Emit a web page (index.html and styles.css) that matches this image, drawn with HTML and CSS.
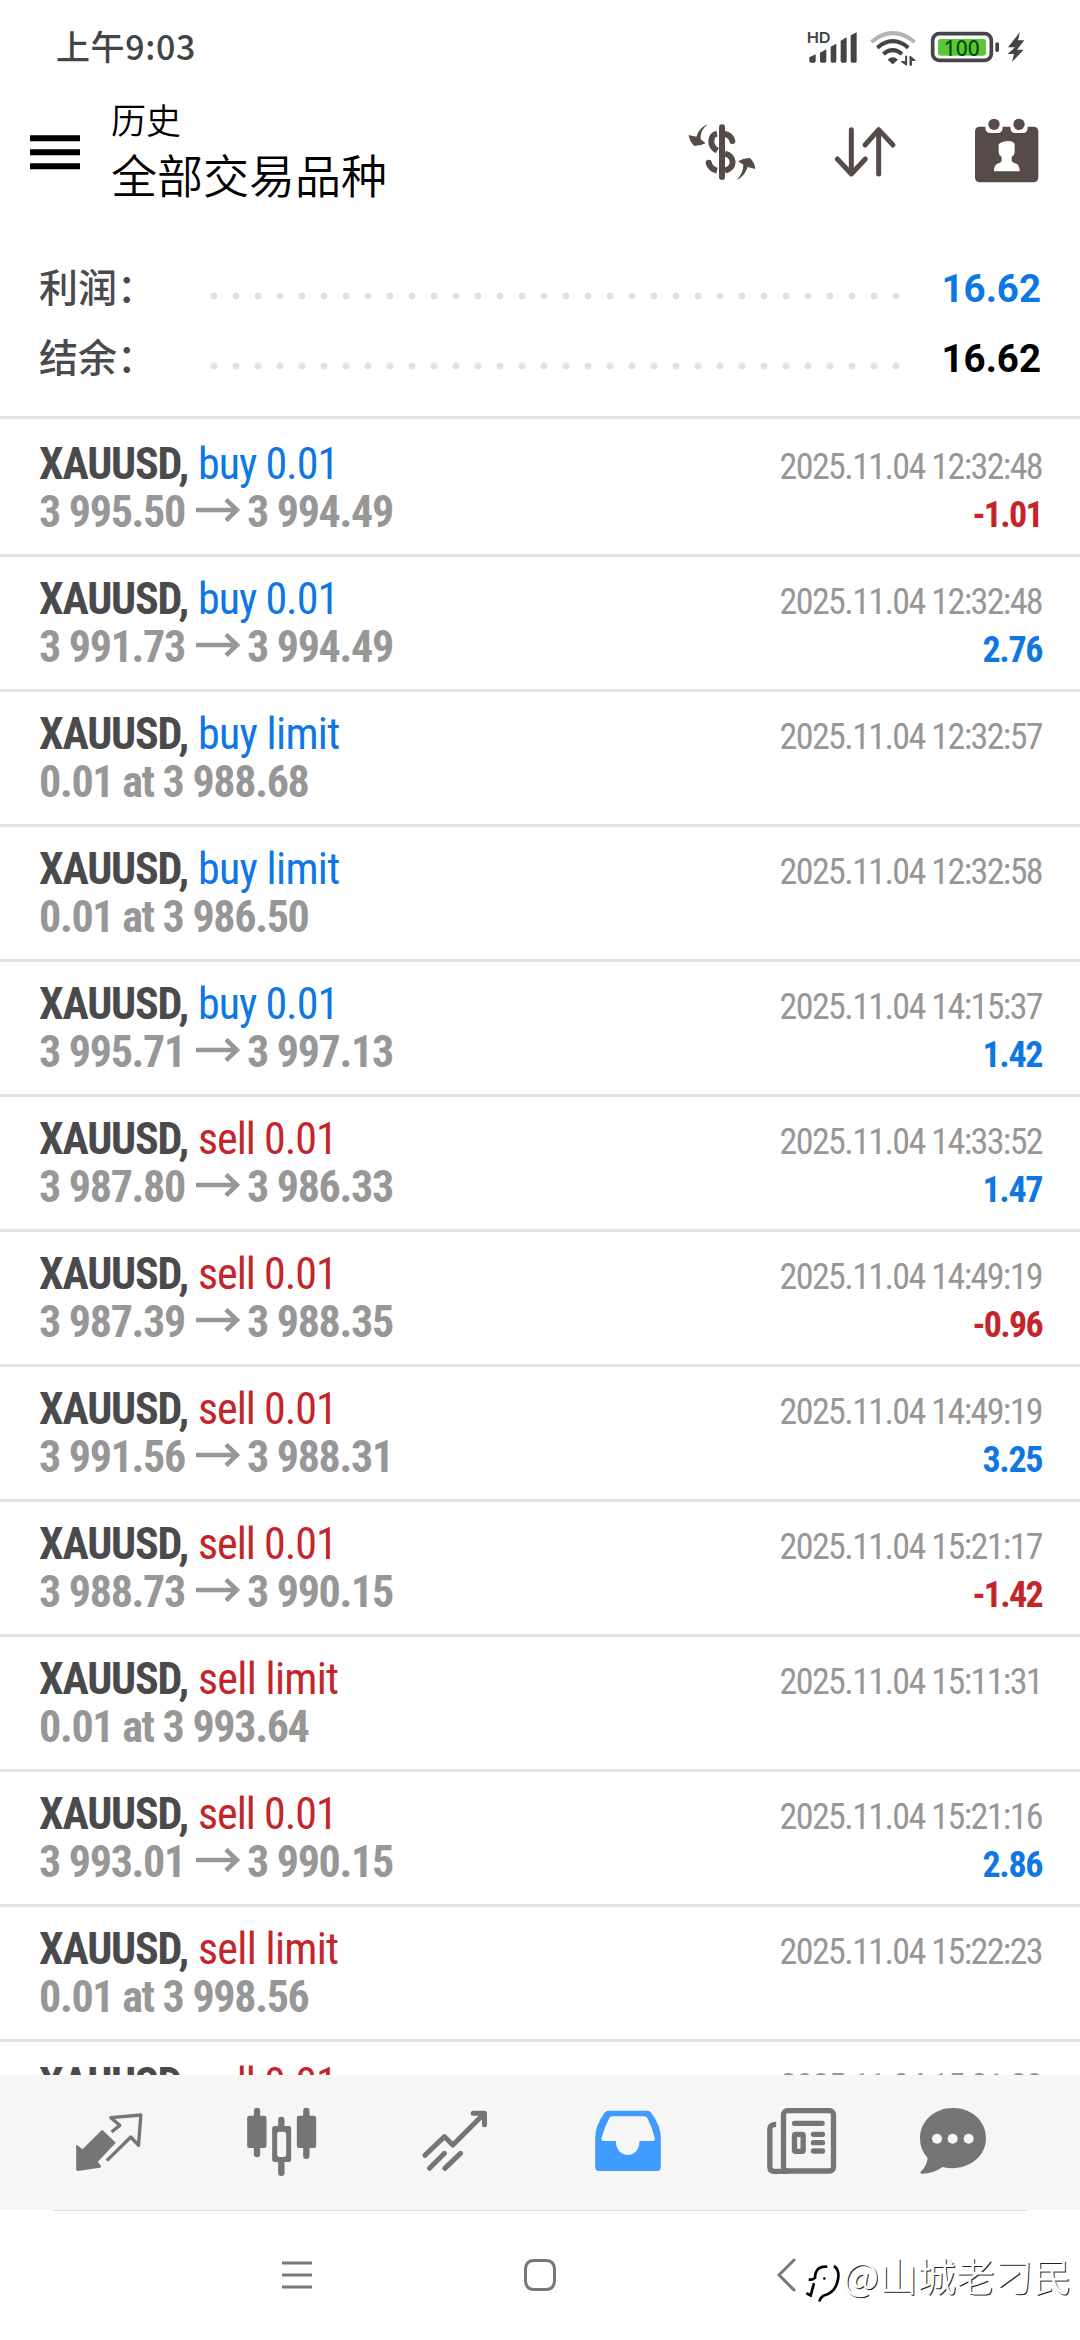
FILE: index.html
```html
<!DOCTYPE html>
<html lang="zh-CN">
<head>
<meta charset="utf-8">
<title>历史</title>
<link rel="stylesheet" href="styles.css">
</head>
<body>
<svg class="defs" width="0" height="0"><symbol id="arrow" viewBox="0 0 44 24"><path d="M0 12H41M30 1.5L41 12L30 22.5" fill="none" stroke="#979797" stroke-width="4.5"/></symbol></svg>
<div class="status">
  <span class="clock">上午9:03</span>
  <svg class="status-icons" viewBox="420 60 690 150">
    <text x="440" y="129" class="hd" textLength="72" lengthAdjust="spacingAndGlyphs">HD</text>
    <g fill="#444">
      <path d="M448 172L467 163V183Q467 188 462 188H453Q448 188 448 183ZM480 158L499 148V183Q499 188 494 188H485Q480 188 480 183ZM512 140L529 131V183Q529 188 524 188H517Q512 188 512 183ZM542 122L560 112V183Q560 188 555 188H547Q542 188 542 183ZM572 106L590 97V183Q590 188 585 188H577Q572 188 572 183Z"/>
      <path d="M683 179Q698 165 714 179L700 191Q698 193 696 191Z"/>
      <path d="M737 168V185H724L740 196V168ZM750 196V168L766 181H754V196Z" stroke="#444" stroke-width="3"/>
      <path d="M1080 96L1044 142H1065L1043 162H1062L1056 186L1091 149H1071L1093 121H1074Z"/>
      <rect x="1006" y="127" width="11" height="29" rx="5"/>
    </g>
    <g fill="none" stroke-width="12">
      <path d="M634 126Q698 73 764 126" stroke="#b5b5b5"/>
      <path d="M652 143Q698 104 745 143" stroke="#444"/>
      <path d="M670 162Q698 139 726 162" stroke="#444"/>
    </g>
    <rect x="818" y="101" width="176" height="80" rx="20" fill="#fff" stroke="#444548" stroke-width="11"/>
    <rect x="834" y="117" width="144" height="50" rx="7" fill="#59c837"/>
    <text x="851" y="167" class="battery" textLength="108" lengthAdjust="spacingAndGlyphs">100</text>
  </svg>
</div>

<header class="header">
  <svg class="menu" viewBox="0 0 50 35"><path d="M0 3.2H50M0 17.2H50M0 31.2H50" stroke="#000" stroke-width="6"/></svg>
  <div class="titles"><div class="section">历史</div><div class="symbols">全部交易品种</div></div>
  <div class="actions">
    <svg viewBox="-27 300 426 300">
      <g fill="none" stroke="#574b4a" stroke-width="18">
        <path d="M186 382V531" stroke-linecap="round"/>
        <path d="M194 402Q212 404 217 423" stroke-linecap="round"/>
        <path d="M171 401C150 405 146 437 172 452"/>
        <path d="M195 461C224 468 227 503 195 512"/>
        <path d="M171 512Q151 507 146 488" stroke-linecap="butt"/>
      </g>
      <circle cx="146" cy="488" r="9" fill="#574b4a"/>
      <path d="M144 373Q119 380 109 410L86 405Q88 424 103 438Q121 438 137 430L122 418Q120 389 144 373Z" fill="#574b4a"/>
      <path d="M229 540Q254 530 263 501L286 507Q284 487 270 474Q251 474 234 484L250 494Q250 520 229 540Z" fill="#574b4a"/>
    </svg>
    <svg viewBox="399 300 426 300"><path d="M574 389V522M532 477L574 522L616 477M656 522V389M615 435L656 389L699 435" fill="none" stroke="#574b4a" stroke-width="15" stroke-linecap="round" stroke-linejoin="round"/></svg>
    <svg viewBox="825 300 426 300">
      <path d="M960 380H976Q976 399 991 399H1013Q1028 399 1028 380H1051Q1051 399 1066 399H1088Q1103 399 1103 380H1120Q1135 380 1135 395V532Q1135 547 1120 547H960Q945 547 945 532V395Q945 380 960 380Z" fill="#574b4a"/>
      <circle cx="1002" cy="373" r="17" fill="#574b4a"/><circle cx="1077" cy="373" r="17" fill="#574b4a"/>
      <path d="M1016 432Q1030 421 1048 423Q1064 424 1064 436V457Q1064 465 1055 471V483Q1060 489 1069 491Q1079 496 1079 514H1002Q1002 496 1012 491Q1021 489 1025 483V471Q1016 465 1016 457Z" fill="#fff"/>
    </svg>
  </div>
</header>

<section class="summary">
  <div class="total"><span class="label">利润：</span><span class="dots"></span><span class="amount blue">16.62</span></div>
  <div class="total"><span class="label">结余：</span><span class="dots"></span><span class="amount">16.62</span></div>
</section>

<main class="deals">
  <div class="deal"><div class="line"><b class="name">XAUUSD,</b><span class="type blue">buy 0.01</span><span class="date">2025.11.04 12:32:48</span></div><div class="line"><span class="price">3 995.50</span><svg class="arrow"><use href="#arrow"/></svg><span class="price">3 994.49</span><b class="profit red">-1.01</b></div></div>
  <div class="deal"><div class="line"><b class="name">XAUUSD,</b><span class="type blue">buy 0.01</span><span class="date">2025.11.04 12:32:48</span></div><div class="line"><span class="price">3 991.73</span><svg class="arrow"><use href="#arrow"/></svg><span class="price">3 994.49</span><b class="profit blue">2.76</b></div></div>
  <div class="deal"><div class="line"><b class="name">XAUUSD,</b><span class="type limit blue">buy limit</span><span class="date">2025.11.04 12:32:57</span></div><div class="line"><span class="price">0.01 at 3 988.68</span></div></div>
  <div class="deal"><div class="line"><b class="name">XAUUSD,</b><span class="type limit blue">buy limit</span><span class="date">2025.11.04 12:32:58</span></div><div class="line"><span class="price">0.01 at 3 986.50</span></div></div>
  <div class="deal"><div class="line"><b class="name">XAUUSD,</b><span class="type blue">buy 0.01</span><span class="date">2025.11.04 14:15:37</span></div><div class="line"><span class="price">3 995.71</span><svg class="arrow"><use href="#arrow"/></svg><span class="price">3 997.13</span><b class="profit blue">1.42</b></div></div>
  <div class="deal"><div class="line"><b class="name">XAUUSD,</b><span class="type red">sell 0.01</span><span class="date">2025.11.04 14:33:52</span></div><div class="line"><span class="price">3 987.80</span><svg class="arrow"><use href="#arrow"/></svg><span class="price">3 986.33</span><b class="profit blue">1.47</b></div></div>
  <div class="deal"><div class="line"><b class="name">XAUUSD,</b><span class="type red">sell 0.01</span><span class="date">2025.11.04 14:49:19</span></div><div class="line"><span class="price">3 987.39</span><svg class="arrow"><use href="#arrow"/></svg><span class="price">3 988.35</span><b class="profit red">-0.96</b></div></div>
  <div class="deal"><div class="line"><b class="name">XAUUSD,</b><span class="type red">sell 0.01</span><span class="date">2025.11.04 14:49:19</span></div><div class="line"><span class="price">3 991.56</span><svg class="arrow"><use href="#arrow"/></svg><span class="price">3 988.31</span><b class="profit blue">3.25</b></div></div>
  <div class="deal"><div class="line"><b class="name">XAUUSD,</b><span class="type red">sell 0.01</span><span class="date">2025.11.04 15:21:17</span></div><div class="line"><span class="price">3 988.73</span><svg class="arrow"><use href="#arrow"/></svg><span class="price">3 990.15</span><b class="profit red">-1.42</b></div></div>
  <div class="deal"><div class="line"><b class="name">XAUUSD,</b><span class="type limit red">sell limit</span><span class="date">2025.11.04 15:11:31</span></div><div class="line"><span class="price">0.01 at 3 993.64</span></div></div>
  <div class="deal"><div class="line"><b class="name">XAUUSD,</b><span class="type red">sell 0.01</span><span class="date">2025.11.04 15:21:16</span></div><div class="line"><span class="price">3 993.01</span><svg class="arrow"><use href="#arrow"/></svg><span class="price">3 990.15</span><b class="profit blue">2.86</b></div></div>
  <div class="deal"><div class="line"><b class="name">XAUUSD,</b><span class="type limit red">sell limit</span><span class="date">2025.11.04 15:22:23</span></div><div class="line"><span class="price">0.01 at 3 998.56</span></div></div>
  <div class="deal"><div class="line"><b class="name">XAUUSD,</b><span class="type red">sell 0.01</span><span class="date">2025.11.04 15:21:23</span></div></div>
</main>

<nav class="tabs">
  <svg viewBox="10.5 0 270 270">
    <path d="M125 104L166 143L112 200L122 214Q122 218 118 218L52 228Q47 228 47 223V153Q48 147 53 152L66 163Z" fill="#757575"/>
    <path d="M153 111L178 91L151 68L241 60L234 151L211 126L139 197" fill="none" stroke="#757575" stroke-width="10" stroke-linejoin="round"/>
  </svg>
  <svg viewBox="529.5 0 270 270">
    <g fill="#757575"><rect x="580" y="38" width="19" height="149" rx="9"/><rect x="560" y="62" width="58" height="97" rx="7"/><rect x="728" y="38" width="19" height="154" rx="9"/><rect x="709" y="62" width="58" height="97" rx="7"/><rect x="653" y="65" width="19" height="178" rx="9"/><rect x="635" y="93" width="57" height="108" rx="7"/></g>
    <rect x="650" y="110" width="27" height="76" rx="7" fill="#f6f6f6"/>
  </svg>
  <svg viewBox="28.5 0 270 270"><path d="M73 181L132 125L157 150L252 55M218 55H252V89M87 220L132 175M133 220L180 175" fill="none" stroke="#757575" stroke-width="15" stroke-linecap="round" stroke-linejoin="round"/></svg>
  <svg viewBox="547.5 0 270 270"><path fill-rule="evenodd" d="M624 47H740Q747 47 752 53Q781 91 781 130V216Q781 228 769 228H596Q584 228 584 216V130Q584 91 612 53Q617 47 624 47ZM636 64Q629 64 626 70Q612 97 603 130Q601 138 609 138H646C646 194 718 194 717 138H757Q765 138 763 130Q756 99 741 70Q738 64 731 64Z" fill="#3f9bff"/></svg>
  <svg viewBox="46.5 0 270 270">
    <g fill="none" stroke="#757575" stroke-width="16"><rect x="129" y="47" width="150" height="181" rx="12"/><path d="M107 88Q88 88 88 103V216Q88 229 101 229H145"/><rect x="162" y="118" width="26" height="51" rx="3"/><path d="M162 85H245M219 118H246M219 143H246M219 168H246" stroke-linecap="round"/></g>
  </svg>
  <svg viewBox="504 0 270 270"><path d="M639 39C698 39 738 80 738 130C738 193 672 232 608 216Q578 237 544 236Q539 235 543 229Q560 214 563 189Q540 164 540 130C540 80 581 39 639 39Z" fill="#757575"/><g fill="#f6f6f6"><circle cx="591" cy="131" r="15"/><circle cx="638" cy="131" r="15"/><circle cx="686" cy="131" r="15"/></g></svg>
</nav>

<footer class="system">
  <svg viewBox="0 0 30 36"><path d="M1 6H29M1 18H29M1 30H29"/></svg>
  <svg viewBox="0 0 36 36"><path d="M12 3.5H24Q32 3.5 32.5 12V24Q32 32.5 24 32.5H12Q4 32.5 3.5 24V12Q4 3.5 12 3.5Z"/></svg>
  <svg class="back" viewBox="0 0 20 36"><path d="M17 3L2 18L17 33"/></svg>
  <div class="watermark">
    <svg viewBox="140 70 105 125"><path d="M148 122Q160 124 167 117Q167 88 190 84L204 83M224 81Q244 96 234 130Q226 162 192 171Q183 176 180 188M164 133L154 170L141 163" fill="none" stroke="#000" stroke-width="8"/><circle cx="195" cy="119" r="4"/></svg>
    <span>@山城老刁民</span>
  </div>
</footer>
</body>
</html>
```
FILE: styles.css
```css
* { box-sizing: border-box; }
body {
  margin: 0;
  width: 1080px;
  height: 2340px;
  overflow: hidden;
  display: flex;
  flex-direction: column;
  background: #fff;
  font-family: Roboto, "Noto Sans CJK SC", sans-serif;
}
svg { display: block; flex: none; }
.defs { position: absolute; }
.blue { color: #0f77e4; }
.red { color: #c4252b; }

.status {
  height: 96px;
  padding: 0 50px 0 56px;
  display: flex;
  justify-content: space-between;
  align-items: flex-start;
}
.clock {
  margin-top: 21px;
  font: 500 34px/50px "Noto Sans CJK SC", sans-serif;
  letter-spacing: 0.6px;
  color: #444;
}
.status-icons { width: 230px; height: 50px; margin-top: 20px; }
.hd { font: 600 45px Inter, sans-serif; fill: #444; }
.battery { font: 500 64px "Noto Sans", sans-serif; fill: #0e4a0c; }

.header {
  height: 154px;
  padding: 0 3px 0 30px;
  display: flex;
  align-items: flex-start;
}
.menu { width: 50px; height: 35px; margin-top: 39px; }
.titles {
  flex: 1;
  margin-left: 31px;
  padding-top: 1px;
  font-family: "Noto Sans CJK SC", sans-serif;
  font-weight: 350;
  color: #000;
}
.section { font-size: 35px; line-height: 44px; }
.symbols { font-size: 46px; line-height: 64px; }
.actions { display: flex; margin-top: 4px; }
.actions svg { width: 142px; height: 100px; }

.summary { height: 166px; padding: 0 39px; }
.total { height: 70px; display: flex; align-items: center; }
.label {
  width: 164px;
  font: 500 39px/70px "Noto Sans CJK SC", sans-serif;
  color: #4a4a4d;
}
.dots {
  width: 704px;
  height: 8px;
  margin-top: 21px;
  background: radial-gradient(circle at 11px 4px, #e2e2e2 3px, transparent 4px) 0 0 / 22px 8px;
}
.amount { flex: 1; padding-top: 6px; text-align: right; font-weight: 700; font-size: 38.5px; }
.amount:not(.blue) { color: #000; }

.deals { height: 1659px; overflow: hidden; }
.deal {
  height: 135px;
  padding: 18px 38px 0 39px;
  border-top: 3px solid #e3e3e3;
  font-family: "Roboto Condensed", Roboto, sans-serif;
  font-size: 44px;
}
.deal:first-child { height: 138px; padding-top: 21px; }
.line { display: flex; align-items: baseline; height: 48px; line-height: 48px; white-space: nowrap; }
.name { width: 159px; letter-spacing: -1.2px; color: #4a4a4d; }
.type { font-weight: 400; letter-spacing: -1px; }
.type.limit { letter-spacing: -0.7px; }
.price { font-weight: 700; letter-spacing: -1.3px; color: #979797; }
.arrow { width: 44px; height: 24px; margin: 0 7px 0 11px; transform: translateY(-5px); }
.date { margin-left: auto; font-size: 36px; letter-spacing: -1.6px; color: #979797; }
.profit { margin-left: auto; font-size: 36px; letter-spacing: -1.4px; }
.profit.red { letter-spacing: -1.7px; }

.tabs {
  height: 135px;
  padding: 20px 61px 0 22px;
  display: grid;
  grid-template-columns: repeat(5, 173px) 1fr;
  justify-items: center;
  background: #f6f6f6;
}
.tabs svg { width: 90px; height: 90px; }

.system {
  height: 130px;
  display: flex;
  align-items: flex-start;
  padding: 47px 0 0 282px;
  background: linear-gradient(#ddd, #ddd) 53px 0 / 974px 1px no-repeat;
}
.system > svg { height: 36px; fill: none; stroke: #777; stroke-width: 3; stroke-linecap: round; }
.system > svg:first-child { width: 30px; }
.system > svg:nth-child(2) { width: 36px; margin-left: 210px; }
.system > .back { width: 20px; margin-left: 219px; }
.watermark { display: flex; margin-left: 9px; }
.watermark svg { width: 35px; height: 42px; margin-top: 5px; }
.watermark span {
  margin: -7px 0 0 2px;
  font: 350 38.5px/48px "Noto Sans CJK SC", sans-serif;
  color: #fff;
  white-space: nowrap;
  text-shadow: 1px 1px 0 #222;
}
```
